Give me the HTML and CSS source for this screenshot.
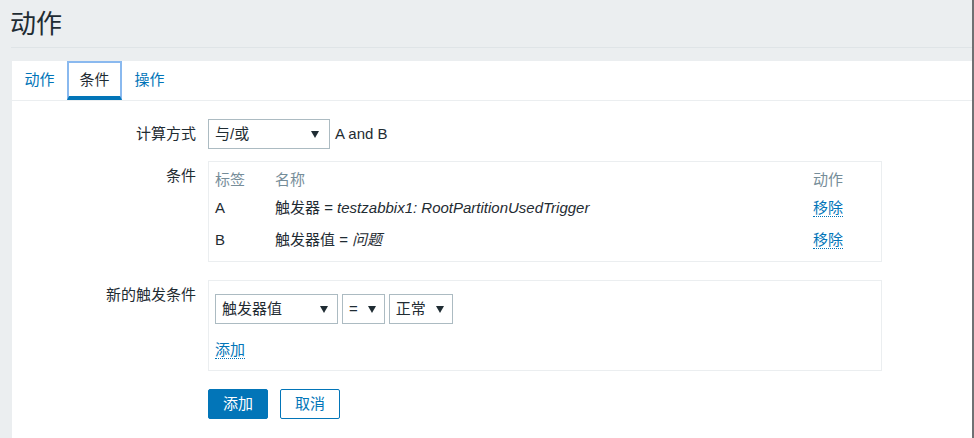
FILE: index.html
```html
<!DOCTYPE html>
<html lang="zh-CN">
<head>
<meta charset="utf-8">
<title>动作</title>
<link rel="stylesheet" href="styles.css">
</head>
<body>
<div class="page">
  <header class="header-title">
    <h1>动作</h1>
  </header>
  <main class="panel">
    <nav class="tabs">
      <a class="tab">动作</a>
      <a class="tab active">条件</a>
      <a class="tab">操作</a>
    </nav>
    <div class="form">
      <div class="row row-calc">
        <div class="label">计算方式</div>
        <div class="field inline">
          <div class="select w-calc"><span>与/或</span><i class="arrow"></i></div>
          <span class="expr">A and B</span>
        </div>
      </div>
      <div class="row row-cond">
        <div class="label">条件</div>
        <div class="field">
          <div class="box cond-box">
            <div class="trow thead">
              <span>标签</span><span>名称</span><span>动作</span>
            </div>
            <div class="trow row-a">
              <span>A</span>
              <span>触发器 = <em>testzabbix1: RootPartitionUsedTrigger</em></span>
              <span><a class="link-action">移除</a></span>
            </div>
            <div class="trow row-b">
              <span>B</span>
              <span>触发器值 = <em>问题</em></span>
              <span><a class="link-action">移除</a></span>
            </div>
          </div>
        </div>
      </div>
      <div class="row row-new">
        <div class="label">新的触发条件</div>
        <div class="field">
          <div class="box new-box">
            <div class="selects">
              <div class="select w-type"><span>触发器值</span><i class="arrow"></i></div>
              <div class="select"><span>=</span><i class="arrow"></i></div>
              <div class="select"><span>正常</span><i class="arrow"></i></div>
            </div>
            <div class="add-line"><a class="link-action">添加</a></div>
          </div>
        </div>
      </div>
      <div class="row row-buttons">
        <div class="label"></div>
        <div class="field buttons">
          <button class="btn btn-primary">添加</button>
          <button class="btn btn-alt">取消</button>
        </div>
      </div>
    </div>
  </main>
</div>
</body>
</html>
```

FILE: styles.css
```css
html {
  background: #ebeef0;
}
body {
  margin: 0;
  width: 974px;
  height: 100vh;
  box-sizing: border-box;
  border-right: 2px solid #6f7173;
  font-family: "Liberation Sans", Arial, "Noto Sans CJK SC", sans-serif;
  font-size: 15px;
  color: #1f2c33;
  overflow: hidden;
}
.page {
  padding-left: 11px;
  height: 100%;
  display: flex;
  flex-direction: column;
}
.header-title {
  padding: 9px 0 8px;
  border-bottom: 1px solid #dfe4e7;
  margin-bottom: 13px;
}
.header-title h1 {
  margin: 0 0 0 -1px;
  font-size: 26px;
  font-weight: normal;
  line-height: 30px;
  color: #1f2c33;
}
.panel {
  flex: 1;
  margin-left: 1px;
  background: #ffffff;
}
.tabs {
  display: flex;
  height: 39px;
  border-bottom: 1px solid #ebeef0;
}
.tab {
  box-sizing: border-box;
  height: 39px;
  display: flex;
  align-items: center;
  padding: 0 10.5px;
  border: 2px solid transparent;
  border-bottom: 4px solid transparent;
  color: #0275b8;
  line-height: 18px;
  cursor: pointer;
}
.tab.active {
  color: #1f2c33;
  border-color: #8ab9ef;
  border-bottom-color: #0275b8;
}
.form {
  padding-top: 18px;
}
.row {
  display: grid;
  grid-template-columns: 184px 674px;
  column-gap: 12px;
}
.label {
  text-align: right;
  line-height: 30px;
}
.field.inline {
  display: flex;
  align-items: center;
  gap: 5px;
}
.expr {
  line-height: 30px;
}
.select {
  box-sizing: border-box;
  height: 30px;
  display: flex;
  align-items: center;
  gap: 10px;
  padding: 0 8px 0 6px;
  border: 1px solid #acbbc2;
  background: #ffffff;
  line-height: 18px;
}
.select .arrow {
  margin-left: auto;
  width: 0;
  height: 0;
  border-left: 4px solid transparent;
  border-right: 4px solid transparent;
  border-top: 7px solid #1f2c33;
}
.w-calc {
  width: 122px;
  padding-right: 10px;
}
.w-type {
  width: 123px;
  padding-right: 9px;
}
.row-cond {
  margin-top: 12px;
}
.box {
  box-sizing: border-box;
  border: 1px solid #ebeef0;
}
.cond-box {
  padding: 5px 6px 4px;
}
.trow {
  display: grid;
  grid-template-columns: 60px 1fr 62px;
  align-items: center;
  line-height: 18px;
}
.thead {
  height: 26px;
  color: #768d99;
}
.row-a {
  height: 29px;
}
.row-b {
  height: 35px;
}
.trow em {
  font-style: italic;
}
.link-action {
  display: inline-block;
  line-height: 17px;
  color: #0275b8;
  border-bottom: 1px dotted #0275b8;
  cursor: pointer;
}
.row-new {
  margin-top: 18px;
}
.new-box {
  padding: 13px 6px 11px;
}
.selects {
  display: flex;
  gap: 4px;
}
.add-line {
  margin-top: 17px;
  height: 18px;
}
.row-buttons {
  margin-top: 18px;
}
.buttons {
  display: flex;
  gap: 12px;
}
.btn {
  box-sizing: border-box;
  height: 30px;
  width: 60px;
  padding: 0;
  border-radius: 2px;
  font-family: "Liberation Sans", Arial, "Noto Sans CJK SC", sans-serif;
  font-size: 15px;
  line-height: 18px;
  cursor: pointer;
}
.btn-primary {
  background: #0275b8;
  border: 1px solid #0275b8;
  color: #ffffff;
}
.btn-alt {
  background: #ffffff;
  border: 1px solid #0275b8;
  color: #0275b8;
}
```
